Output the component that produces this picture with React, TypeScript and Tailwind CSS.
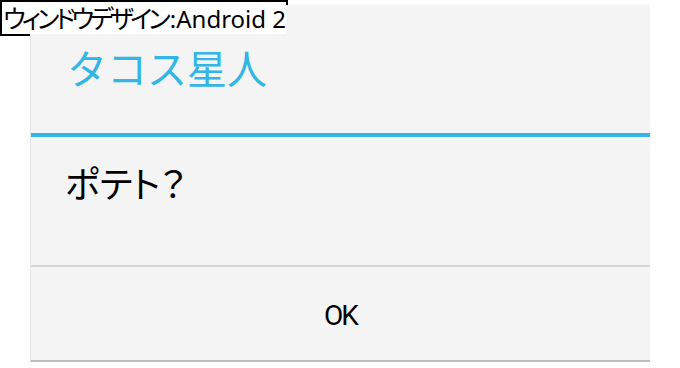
import React from "react";

export default function App() {
  return (
    <div className="relative w-[680px] h-[368px] bg-white overflow-hidden">
      {/* label box (behind panel) */}
      <div className="absolute top-0 left-0 w-[288px] h-[36px] border-2 border-black bg-white">
        <span className="relative z-10 flex items-baseline w-fit bg-white pl-px h-[32px] leading-[32px] text-black whitespace-nowrap [font-family:'Noto_Sans','Noto_Sans_CJK_JP',sans-serif]">
          <span className="text-[25px] tracking-[-3.8px] [font-feature-settings:'palt']">ウィンドウデザイン</span>
          <span className="text-[24px] pl-[3px]">:Android 2</span>
        </span>
      </div>
      {/* dialog panel */}
      <div className="relative ml-[30px] mt-[5px] w-[620px] h-[357px] flex flex-col bg-[#f4f4f4] border-l border-l-[#e6e6e6] border-b-2 border-b-[#bcbcbc] [font-family:'Noto_Sans','Noto_Sans_CJK_JP',sans-serif]">
        <div className="h-[128px] pl-[36px] pt-[44px]">
          <div className="text-[40px] leading-[40px] text-[#33b5e5] whitespace-nowrap">タコス星人</div>
        </div>
        <div className="h-[4px] bg-[#33b5e5]" />
        <div className="h-[128px] pl-[34px] pt-[30px]">
          <div className="text-[36px] leading-[36px] text-black whitespace-nowrap [font-feature-settings:'palt']">ポテト？</div>
        </div>
        <div className="h-[2px] bg-[#d6d6d6]" />
        <div className="flex-1 flex items-center justify-center">
          <span className="text-[28px] leading-[32px] tracking-[-2px] text-black [font-family:Roboto,sans-serif] mt-[4px]">OK</span>
        </div>
      </div>
    </div>
  );
}
